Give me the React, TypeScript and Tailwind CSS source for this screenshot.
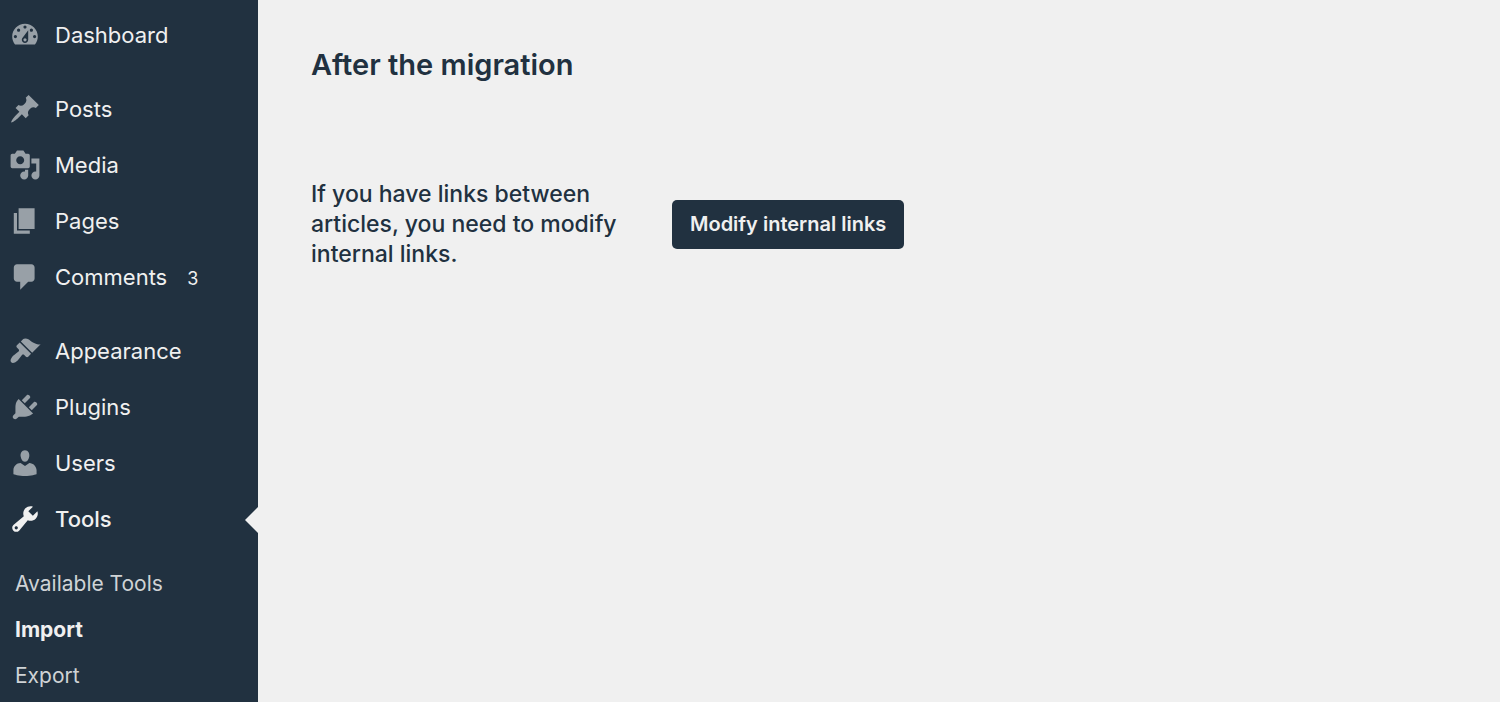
import React from "react";

type Item = { label: string; path: string; count?: number; current?: boolean };

const groups: Item[][] = [
  [
    {
      label: "Dashboard",
      path: "M3.76 16h12.48c1.1-1.37 1.76-3.11 1.76-5 0-4.42-3.58-8-8-8s-8 3.58-8 8c0 1.89.66 3.63 1.76 5zM10 4c.55 0 1 .45 1 1s-.45 1-1 1-1-.45-1-1 .45-1 1-1zM6 6c.55 0 1 .45 1 1s-.45 1-1 1-1-.45-1-1 .45-1 1-1zm8 0c.55 0 1 .45 1 1s-.45 1-1 1-1-.45-1-1 .45-1 1-1zm-5.37 5.55L12 7v6c0 1.1-.9 2-2 2s-2-.9-2-2c0-.57.24-1.08.63-1.45zM4 10c.55 0 1 .45 1 1s-.45 1-1 1-1-.45-1-1 .45-1 1-1zm12 0c.55 0 1 .45 1 1s-.45 1-1 1-1-.45-1-1 .45-1 1-1zm-5 3c0-.55-.45-1-1-1s-1 .45-1 1 .45 1 1 1 1-.45 1-1z",
    },
  ],
  [
    {
      label: "Posts",
      path: "M10.44 3.02l1.82-1.82 6.36 6.35-1.83 1.82c-1.05-.68-2.48-.57-3.41.36l-.75.75c-.92.93-1.04 2.35-.35 3.41l-1.83 1.82-2.41-2.41-2.8 2.79c-.42.42-3.38 2.71-3.8 2.29s1.86-3.39 2.28-3.81l2.79-2.79L4.1 9.36l1.83-1.82c1.05.69 2.48.57 3.4-.36l.75-.75c.93-.92 1.05-2.35.36-3.41z",
    },
    {
      label: "Media",
      path: "M13 11V4c0-.55-.45-1-1-1h-1.67L9 1H5L3.67 3H2c-.55 0-1 .45-1 1v7c0 .55.45 1 1 1h10c.55 0 1-.45 1-1zM7 4.5c1.38 0 2.5 1.12 2.5 2.5S8.38 9.5 7 9.5 4.5 8.38 4.5 7 5.62 4.5 7 4.5zM14 6h5v10.5c0 1.38-1.12 2.5-2.5 2.5S14 17.88 14 16.5s1.12-2.5 2.5-2.5c.17 0 .34.02.5.05V9h-3V6zm-4 8.05V13h2v3.5c0 1.38-1.12 2.5-2.5 2.5S7 17.88 7 16.5 8.12 14 9.5 14c.17 0 .34.02.5.05z",
    },
    { label: "Pages", path: "M6 15V2h10v13H6zm-1 1h8v2H3V5h2v11z" },
    {
      label: "Comments",
      count: 3,
      path: "M5 2h9c1.1 0 2 .9 2 2v7c0 1.1-.9 2-2 2h-2l-5 5v-5H5c-1.1 0-2-.9-2-2V4c0-1.1.9-2 2-2z",
    },
  ],
  [
    {
      label: "Appearance",
      path: "M14.48 11.06L7.41 3.99l1.5-1.5c.5-.56 2.3-.47 3.51.32 1.21.8 1.43 1.28 2.91 2.1 1.18.64 2.45 1.26 4.45.85zm-.71.71L6.7 4.7 4.93 6.47c-.39.39-.39 1.02 0 1.41l1.06 1.06c.39.39.39 1.03 0 1.42-.6.6-1.43 1.11-2.21 1.69-.35.26-.7.53-1.01.84C1.43 14.23.4 16.08 1.4 17.07c.99 1 2.84-.03 4.18-1.36.31-.31.58-.66.85-1.02.57-.78 1.08-1.61 1.69-2.21.39-.39 1.02-.39 1.41 0l1.06 1.06c.39.39 1.02.39 1.41 0z",
    },
    {
      label: "Plugins",
      path: "M13.11 4.36L9.87 7.6 8 5.73l3.24-3.24c.35-.34 1.05-.2 1.56.32.52.51.66 1.21.31 1.55zm-8 1.77l.91-1.12 9.01 9.01-1.19.84c-.71.71-2.63 1.16-3.82 1.16H6.14L4.9 17.26c-.59.59-1.54.59-2.12 0-.59-.58-.59-1.53 0-2.12l1.24-1.24v-3.88c0-1.13.4-3.19 1.09-3.89zm7.26 3.97l3.24-3.24c.34-.35 1.04-.21 1.55.31.52.51.66 1.21.31 1.55l-3.24 3.25z",
    },
    {
      label: "Users",
      path: "M10 9.25c-2.27 0-2.73-3.44-2.73-3.44C7 4.02 7.82 2 9.97 2c2.16 0 2.98 2.02 2.71 3.81 0 0-.41 3.44-2.68 3.44zm0 2.57L12.72 10c2.39 0 4.52 2.33 4.52 4.53v2.49s-3.65 1.13-7.24 1.13c-3.65 0-7.24-1.13-7.24-1.13v-2.49c0-2.25 1.94-4.48 4.47-4.48z",
    },
    {
      label: "Tools",
      current: true,
      path: "M16.68 9.77c-1.34 1.34-3.3 1.67-4.95.99l-5.41 6.52c-.99.99-2.59.99-3.58 0s-.99-2.59 0-3.57l6.52-5.42c-.68-1.65-.35-3.61.99-4.95 1.28-1.28 3.12-1.62 4.72-1.06l-2.89 2.89 2.82 2.82 2.86-2.87c.53 1.58.18 3.39-1.08 4.65zM3.81 16.21c.4.39 1.04.39 1.43 0 .4-.4.4-1.04 0-1.43-.39-.4-1.03-.4-1.43 0-.39.39-.39 1.03 0 1.43z",
    },
  ],
];

const toolLinks = [
  { label: "Available Tools", current: false },
  { label: "Import", current: true },
  { label: "Export", current: false },
];

function MenuItem({ item }: { item: Item }) {
  return (
    <li className="relative">
      <a
        href="#"
        className={`flex h-14 items-center gap-[14px] pl-[9px] text-[22px] text-[#f0f0f0] ${item.current ? "font-medium" : "font-normal"}`}
      >
        <svg
          viewBox="0 0 20 20"
          aria-hidden="true"
          className={`size-8 shrink-0 ${item.current ? "fill-[#f0f0f0]" : "fill-[#98a0a7]"}`}
        >
          <path fillRule="evenodd" d={item.path} />
        </svg>
        <span className="flex items-baseline gap-5">
          {item.label}
          {item.count !== undefined && <span className="text-lg">{item.count}</span>}
        </span>
      </a>
      {item.current && (
        <svg viewBox="0 0 13 26" aria-hidden="true" className="absolute top-4 right-0 h-[26px] w-[13px] fill-[#f0f0f0]">
          <path d="M13 0v26L0 13z" />
        </svg>
      )}
    </li>
  );
}

export default function App() {
  return (
    <div className="flex min-h-screen bg-[#f0f0f0] font-['Inter',sans-serif] text-[#213140]">
      <nav aria-label="Main menu" className="w-[258px] shrink-0 bg-[#213140] pt-[7px]">
        <div className="flex flex-col gap-[18px]">
          {groups.map((group) => (
            <ul key={group[0].label}>
              {group.map((item) => (
                <MenuItem key={item.label} item={item} />
              ))}
            </ul>
          ))}
        </div>
        <ul className="pt-[14px]">
          {toolLinks.map((link) => (
            <li key={link.label}>
              <a
                href="#"
                className={`flex h-[46px] items-center pl-[15px] text-[21px] ${link.current ? "font-bold text-[#f0f0f0]" : "font-normal text-[#cfd3d6]"}`}
              >
                {link.label}
              </a>
            </li>
          ))}
        </ul>
      </nav>
      <main className="flex-1 px-[53px] pt-[46px]">
        <h2 className="text-[29px] leading-[38px] font-semibold">After the migration</h2>
        <div className="mt-[95px] flex items-center gap-12">
          <p className="w-[313px] text-[23px] leading-[30px] font-medium">
            If you have links between articles, you need to modify internal links.
          </p>
          <button type="button" className="h-[49px] rounded-[5px] bg-[#213140] px-[18px] text-xl font-semibold text-[#f0f0f0]">
            Modify internal links
          </button>
        </div>
      </main>
    </div>
  );
}
